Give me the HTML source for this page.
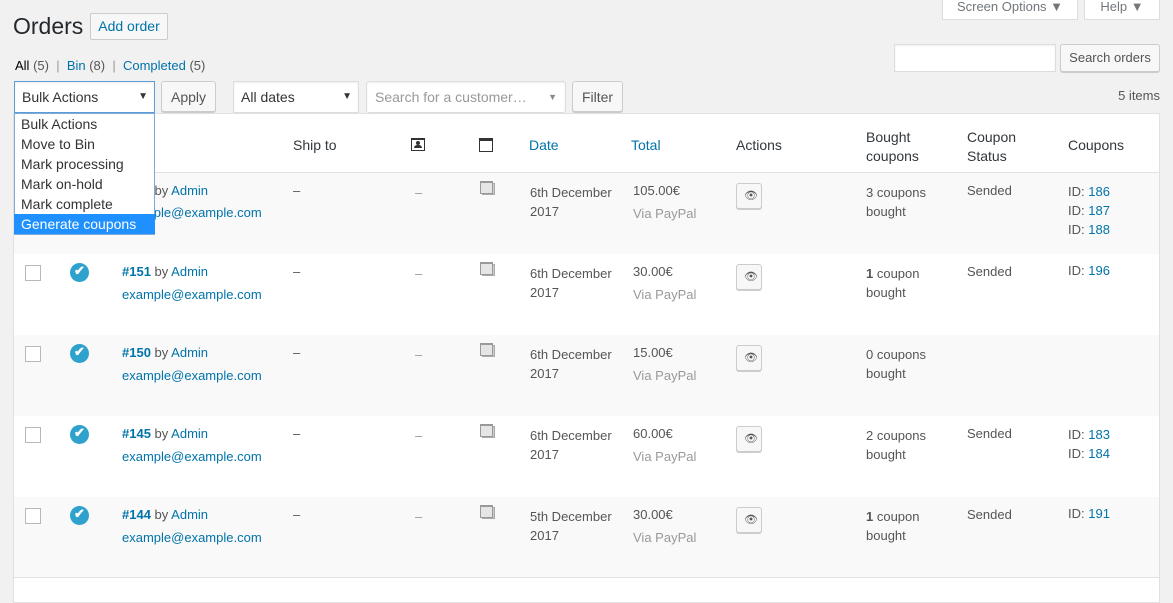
<!DOCTYPE html>
<html><head><meta charset="utf-8"><style>
*{box-sizing:border-box;margin:0;padding:0}
body{width:1173px;height:591px;background:#f1f1f1;font-family:"Liberation Sans",sans-serif;font-size:13px;color:#555;position:relative;overflow:hidden}
.a{position:absolute;white-space:nowrap}
.btn{position:absolute;background:#f7f7f7;border:1px solid #ccc;border-radius:3px;box-shadow:0 1px 0 #ccc;color:#555;font-size:13px;text-align:center}
.inp{position:absolute;background:#fff;border:1px solid #ddd;box-shadow:inset 0 1px 2px rgba(0,0,0,.07)}
.blue{color:#0073aa}
.row{position:absolute;left:14px;width:1145px;height:81px}
.cb{position:absolute;left:25px;width:16px;height:16px;border:1px solid #b4b9be;background:#fff}
.chk{position:absolute;left:70px;width:19px;height:19px;border-radius:50%;background:#2ea2cc}
.eye{position:absolute;left:736px;width:26px;height:26px;background:#f7f7f7;border:1px solid #ccc;border-radius:3px;box-shadow:0 1px 0 #ccc}
.ic{position:absolute;left:480px;width:14px;height:13px}
.ic:before{content:"";position:absolute;left:2px;top:2px;width:11px;height:10px;border:1px solid #aaa;background:#ccc}
.ic:after{content:"";position:absolute;left:0;top:0;width:11px;height:10px;border:1px solid #999;border-top-width:2px;background:#e5e5e5}
.dd div{height:20px;line-height:20px;padding-left:7px;color:#333;font-size:14px}
</style></head><body>
<div class="a" style="left:13px;top:13px;font-size:23px;color:#23282d">Orders</div>
<div class="a" style="left:90px;top:13px;width:78px;height:27px;border:1px solid #ccc;border-radius:2px;background:#f7f7f7;color:#0073aa;font-size:14px;line-height:25px;text-align:center">Add order</div>
<div class="a" style="left:942px;top:-8px;width:136px;height:28px;background:#fff;border:1px solid #ddd;text-align:center;line-height:28px;color:#72777c">Screen Options ▼</div>
<div class="a" style="left:1084px;top:-8px;width:76px;height:28px;background:#fff;border:1px solid #ddd;text-align:center;line-height:28px;color:#72777c">Help ▼</div>
<div class="a" style="left:15px;top:58px;font-size:13px"><span style="color:#000">All</span> (5) <span style="color:#999">&nbsp;|&nbsp;</span> <span class="blue">Bin</span> (8) <span style="color:#999">&nbsp;|&nbsp;</span> <span class="blue">Completed</span> (5)</div>
<div class="inp" style="left:894px;top:44px;width:162px;height:28px"></div>
<div class="btn" style="left:1060px;top:44px;width:100px;height:28px;line-height:26px">Search orders</div>
<div class="a" style="right:13px;top:88px;color:#555">5 items</div>
<div class="inp" style="left:14px;top:81px;width:141px;height:32px;border:1px solid #5b9dd9;line-height:30px;padding-left:7px;color:#333;font-size:14px">Bulk Actions<span style="position:absolute;right:6px;font-size:10px">▼</span></div>
<div class="btn" style="left:161px;top:81px;width:55px;height:31px;line-height:30px;font-size:14px">Apply</div>
<div class="inp" style="left:233px;top:81px;width:126px;height:32px;line-height:30px;padding-left:7px;color:#333;font-size:14px">All dates<span style="position:absolute;right:6px;font-size:10px">▼</span></div>
<div class="inp" style="left:366px;top:81px;width:200px;height:32px;line-height:30px;padding-left:8px;color:#999;font-size:14px;border-radius:3px">Search for a customer…<span style="position:absolute;right:8px;font-size:9px;color:#888">▼</span></div>
<div class="btn" style="left:572px;top:81px;width:51px;height:31px;line-height:30px;font-size:14px">Filter</div>

<div class="a" style="left:13px;top:113px;width:1147px;height:490px;background:#fff;border:1px solid #e1e1e1"></div>
<div class="a" style="left:14px;top:172px;width:1145px;height:1px;background:#e1e1e1"></div>
<div class="row" style="top:173px;background:#f9f9f9"></div>
<div class="row" style="top:335px;background:#f9f9f9"></div>
<div class="row" style="top:497px;background:#f9f9f9;height:80px"></div>
<div class="a" style="left:13px;top:577px;width:1147px;height:1px;background:#e1e1e1"></div>

<div class="a" style="left:293px;top:137px;color:#32373c;font-size:14px">Ship to</div>
<div class="a" style="left:411px;top:138px;width:14px;height:13px;border:1px solid #333;border-top-width:2px"><div style="position:absolute;left:4px;top:1px;width:4px;height:4px;background:#333;border-radius:2px"></div><div style="position:absolute;left:2px;top:5px;width:8px;height:3px;background:#333;border-radius:3px 3px 0 0"></div></div>
<div class="a" style="left:479px;top:138px;width:14px;height:14px;border:1px solid #333;border-top-width:3px"></div>
<div class="a blue" style="left:529px;top:137px;font-size:14px">Date</div>
<div class="a blue" style="left:631px;top:137px;font-size:14px">Total</div>
<div class="a" style="left:736px;top:137px;color:#32373c;font-size:14px">Actions</div>
<div class="a" style="left:866px;top:128px;color:#32373c;font-size:14px;line-height:19px">Bought<br>coupons</div>
<div class="a" style="left:967px;top:128px;color:#32373c;font-size:14px;line-height:19px">Coupon<br>Status</div>
<div class="a" style="left:1068px;top:137px;color:#32373c;font-size:14px">Coupons</div>

<div class="a" style="left:0;top:172px;width:1173px;height:420px">
 <div class="a" style="left:122px;top:11px;font-size:13px"><b class="blue">#152</b> by <span class="blue">Admin</span></div>
 <div class="a blue" style="left:122px;top:33px">example@example.com</div>
</div>

<div class="a" style="left:14px;top:113px;width:141px;height:122px;background:#fff;border:1px solid #7fa9d6;z-index:5" ></div>
<div class="a dd" style="left:14px;top:114px;width:141px;z-index:6">
<div>Bulk Actions</div><div>Move to Bin</div><div>Mark processing</div><div>Mark on-hold</div><div>Mark complete</div><div style="background:#1e90ff;color:#fff">Generate coupons</div>
</div>

<div class="a" style="left:0;top:172px">
<div class="a" style="left:293px;top:11px">–</div><div class="a" style="left:415px;top:13px;color:#999">–</div><div class="ic" style="top:9px"></div>
<div class="a" style="left:530px;top:11px;line-height:19px">6th December<br>2017</div>
<div class="a" style="left:633px;top:11px">105.00€</div><div class="a" style="left:633px;top:34px;color:#999">Via PayPal</div>
<div class="eye" style="top:11px"><span style="position:absolute;left:7px;top:5px;font-size:11px">👁</span></div>
<div class="a" style="left:866px;top:11px;line-height:19px">3 coupons<br>bought</div>
<div class="a" style="left:967px;top:11px">Sended</div>
<div class="a" style="left:1068px;top:10px;line-height:19px">ID: <span class="blue">186</span><br>ID: <span class="blue">187</span><br>ID: <span class="blue">188</span></div>
</div>

<div class="a" style="left:0;top:253px">
<div class="cb" style="top:12px"></div><div class="chk" style="top:10px"><span style="position:absolute;left:4px;top:0;color:#fff;font-size:13px;font-weight:bold">✔</span></div>
<div class="a" style="left:122px;top:11px"><b class="blue">#151</b> by <span class="blue">Admin</span></div><div class="a blue" style="left:122px;top:34px">example@example.com</div>
<div class="a" style="left:293px;top:11px">–</div><div class="a" style="left:415px;top:13px;color:#999">–</div><div class="ic" style="top:9px"></div>
<div class="a" style="left:530px;top:11px;line-height:19px">6th December<br>2017</div>
<div class="a" style="left:633px;top:11px">30.00€</div><div class="a" style="left:633px;top:34px;color:#999">Via PayPal</div>
<div class="eye" style="top:11px"><span style="position:absolute;left:7px;top:5px;font-size:11px">👁</span></div>
<div class="a" style="left:866px;top:11px;line-height:19px"><b>1</b> coupon<br>bought</div>
<div class="a" style="left:967px;top:11px">Sended</div>
<div class="a" style="left:1068px;top:10px">ID: <span class="blue">196</span></div>
</div>

<div class="a" style="left:0;top:334px">
<div class="cb" style="top:12px"></div><div class="chk" style="top:10px"><span style="position:absolute;left:4px;top:0;color:#fff;font-size:13px;font-weight:bold">✔</span></div>
<div class="a" style="left:122px;top:11px"><b class="blue">#150</b> by <span class="blue">Admin</span></div><div class="a blue" style="left:122px;top:34px">example@example.com</div>
<div class="a" style="left:293px;top:11px">–</div><div class="a" style="left:415px;top:13px;color:#999">–</div><div class="ic" style="top:9px"></div>
<div class="a" style="left:530px;top:11px;line-height:19px">6th December<br>2017</div>
<div class="a" style="left:633px;top:11px">15.00€</div><div class="a" style="left:633px;top:34px;color:#999">Via PayPal</div>
<div class="eye" style="top:11px"><span style="position:absolute;left:7px;top:5px;font-size:11px">👁</span></div>
<div class="a" style="left:866px;top:11px;line-height:19px">0 coupons<br>bought</div>
</div>

<div class="a" style="left:0;top:415px">
<div class="cb" style="top:12px"></div><div class="chk" style="top:10px"><span style="position:absolute;left:4px;top:0;color:#fff;font-size:13px;font-weight:bold">✔</span></div>
<div class="a" style="left:122px;top:11px"><b class="blue">#145</b> by <span class="blue">Admin</span></div><div class="a blue" style="left:122px;top:34px">example@example.com</div>
<div class="a" style="left:293px;top:11px">–</div><div class="a" style="left:415px;top:13px;color:#999">–</div><div class="ic" style="top:9px"></div>
<div class="a" style="left:530px;top:11px;line-height:19px">6th December<br>2017</div>
<div class="a" style="left:633px;top:11px">60.00€</div><div class="a" style="left:633px;top:34px;color:#999">Via PayPal</div>
<div class="eye" style="top:11px"><span style="position:absolute;left:7px;top:5px;font-size:11px">👁</span></div>
<div class="a" style="left:866px;top:11px;line-height:19px">2 coupons<br>bought</div>
<div class="a" style="left:967px;top:11px">Sended</div>
<div class="a" style="left:1068px;top:10px;line-height:19px">ID: <span class="blue">183</span><br>ID: <span class="blue">184</span></div>
</div>

<div class="a" style="left:0;top:496px">
<div class="cb" style="top:12px"></div><div class="chk" style="top:10px"><span style="position:absolute;left:4px;top:0;color:#fff;font-size:13px;font-weight:bold">✔</span></div>
<div class="a" style="left:122px;top:11px"><b class="blue">#144</b> by <span class="blue">Admin</span></div><div class="a blue" style="left:122px;top:34px">example@example.com</div>
<div class="a" style="left:293px;top:11px">–</div><div class="a" style="left:415px;top:13px;color:#999">–</div><div class="ic" style="top:9px"></div>
<div class="a" style="left:530px;top:11px;line-height:19px">5th December<br>2017</div>
<div class="a" style="left:633px;top:11px">30.00€</div><div class="a" style="left:633px;top:34px;color:#999">Via PayPal</div>
<div class="eye" style="top:11px"><span style="position:absolute;left:7px;top:5px;font-size:11px">👁</span></div>
<div class="a" style="left:866px;top:11px;line-height:19px"><b>1</b> coupon<br>bought</div>
<div class="a" style="left:967px;top:11px">Sended</div>
<div class="a" style="left:1068px;top:10px">ID: <span class="blue">191</span></div>
</div>
</body></html>
